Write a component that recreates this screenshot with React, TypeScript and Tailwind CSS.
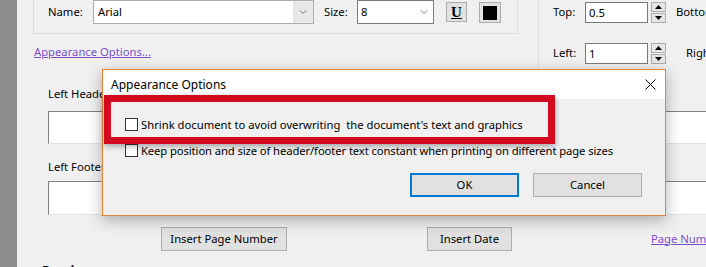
import { ChevronDown } from 'lucide-react';

const font = "font-['Noto_Sans','Open_Sans',sans-serif]";

const Spinner = () => (
  <div className="flex flex-col gap-[1px] ml-[3px]">
    <div className="w-[15px] h-[10px] bg-[#e6e6e6] border border-[#adadad] flex items-center justify-center">
      <svg width="7" height="4" viewBox="0 0 7 4"><path d="M0 4 L3.5 0 L7 4 Z" fill="#000" /></svg>
    </div>
    <div className="w-[15px] h-[10px] bg-[#e6e6e6] border border-[#adadad] flex items-center justify-center">
      <svg width="7" height="4" viewBox="0 0 7 4"><path d="M0 0 L3.5 4 L7 0 Z" fill="#000" /></svg>
    </div>
  </div>
);

const TextBox = ({ className = '' }: { className?: string }) => (
  <div className={`bg-white border border-t-[#828282] border-l-[#828282] border-r-[#e3e3e3] border-b-[#e3e3e3] ${className}`} />
);

const Btn = ({ label, className = '' }: { label: string; className?: string }) => (
  <div className={`h-[24px] bg-[#e1e1e1] border border-[#adadad] flex items-center justify-center text-black ${className}`}>
    {label}
  </div>
);

const App = () => {
  return (
    <div className={`relative w-[706px] h-[267px] overflow-hidden flex bg-[#f0f0f0] text-[11.25px] ${font}`}>
      {/* window edge */}
      <div className="w-[17px] shrink-0 bg-[#8c8c8c]" />

      <div className="flex-1 flex flex-col text-black">
        {/* Font + Margin groups */}
        <div className="flex h-[70px] shrink-0">
          <div className="w-[521px] shrink-0 flex flex-col">
            <div className="ml-[16px] w-[485px] h-[34px] border-x border-b border-[#dcdcdc] flex items-start pl-[14px]">
              <span className="w-[45px] mt-[4px]">Name:</span>
              <div className="w-[221px] h-[24px] border border-[#adadad] bg-white flex">
                <span className="flex-1 pl-[4px] pt-[3px]">Arial</span>
                <div className="w-[20px] bg-[#e8e8e8] flex items-center justify-center">
                  <ChevronDown size={12} strokeWidth={1.5} color="#555" />
                </div>
              </div>
              <span className="ml-[10px] w-[33px] mt-[4px]">Size:</span>
              <div className="w-[77px] h-[24px] border border-[#7a7a7a] bg-white flex">
                <span className="flex-1 pl-[3px] pt-[3px]">8</span>
                <div className="w-[18px] flex items-center justify-center">
                  <ChevronDown size={12} strokeWidth={1.5} color="#555" />
                </div>
              </div>
              <div className="ml-[12px] mt-[2px] w-[21px] h-[20px] bg-[#e1e1e1] border border-[#adadad] flex items-center justify-center">
                <span className="font-['Liberation_Serif',serif] font-bold text-[15px] underline leading-none">U</span>
              </div>
              <div className="ml-[12px] mt-[2px] w-[22px] h-[21px] bg-[#e1e1e1] border border-[#adadad] flex items-center justify-center">
                <div className="w-[14px] h-[14px] bg-black" />
              </div>
            </div>
            <a className="ml-[17px] mt-[12px] text-[#7a50c8] underline leading-none">Appearance Options...</a>
          </div>
          <div className="flex-1 border-l border-[#dcdcdc] flex flex-col pl-[14px] pt-[2px] gap-[20px]">
            <div className="flex items-center">
              <span className="w-[32px]">Top:</span>
              <div className="w-[63px] h-[21px] border border-[#7a7a7a] bg-white pl-[3px] leading-[19px]">0.5</div>
              <Spinner />
              <span className="ml-[10px] whitespace-nowrap">Bottom:</span>
            </div>
            <div className="flex items-center">
              <span className="w-[32px]">Left:</span>
              <div className="w-[63px] h-[21px] border border-[#7a7a7a] bg-white pl-[3px] leading-[19px]">1</div>
              <Spinner />
              <span className="ml-[20px] whitespace-nowrap">Right:</span>
            </div>
          </div>
        </div>

        {/* Header / footer text */}
        <div className="ml-[31px] mt-[16px] grid grid-cols-[220px_220px_220px] gap-x-[10px]">
          <span className="leading-[16px]">Left Header Text</span>
          <span className="leading-[16px]">Center Header Text</span>
          <span className="leading-[16px]">Right Header Text</span>
          <TextBox className="mt-[9px] h-[33px]" />
          <TextBox className="mt-[9px] h-[33px]" />
          <TextBox className="mt-[9px] h-[33px] ml-[-42px]" />
          <span className="mt-[15px] leading-[16px]">Left Footer Text</span>
          <span className="mt-[15px] leading-[16px]">Center Footer Text</span>
          <span className="mt-[15px] leading-[16px]">Right Footer Text</span>
          <TextBox className="mt-[6px] h-[34px]" />
          <TextBox className="mt-[6px] h-[34px]" />
          <TextBox className="mt-[6px] h-[34px] ml-[-42px]" />
        </div>

        <div className="mt-[12px] flex items-center shrink-0">
          <Btn label="Insert Page Number" className="ml-[144px] w-[126px]" />
          <Btn label="Insert Date" className="ml-[140px] w-[85px]" />
          <a className="ml-[139px] text-[#7a50c8] underline whitespace-nowrap">Page Number and Date Format...</a>
        </div>

        <div className="ml-[25px] mt-[13px] font-bold text-[13px] leading-none shrink-0">Preview</div>
      </div>

      {/* Appearance Options dialog */}
      <div className="absolute left-[102px] top-[69px] w-[564px] h-[147px] border border-[#e8833a] bg-[#f0f0f0] shadow-[0_4px_14px_rgba(0,0,0,0.3)] flex flex-col text-black">
        <div className="h-[29px] bg-white flex items-center justify-between pl-[8px] pr-[9px]">
          <span className="text-[12px]">Appearance Options</span>
          <svg width="11" height="11" viewBox="0 0 11 11">
            <path d="M0.5 0.5 L10.5 10.5 M10.5 0.5 L0.5 10.5" stroke="#000" strokeWidth="1" />
          </svg>
        </div>
        <div className="flex flex-col pl-[22px] pt-[19px] gap-[13px]">
          <label className="flex items-center gap-[3px] whitespace-nowrap">
            <span className="w-[13px] h-[13px] border border-[#333] bg-white shrink-0" />
            <span className="leading-[13px]">Shrink document to avoid overwriting&nbsp; the document's text and graphics</span>
          </label>
          <label className="flex items-center gap-[3px] whitespace-nowrap">
            <span className="w-[13px] h-[13px] border border-[#333] bg-white shrink-0" />
            <span className="leading-[13px] tracking-[-0.1px]">Keep position and size of header/footer text constant when printing on different page sizes</span>
          </label>
        </div>
        <div className="mt-auto mb-[18px] flex justify-end gap-[14px] pr-[23px]">
          <div className="w-[109px] h-[24px] border-2 border-[#0078d7] bg-[#e1e1e1] flex items-center justify-center">OK</div>
          <div className="w-[109px] h-[24px] border border-[#adadad] bg-[#e1e1e1] flex items-center justify-center">Cancel</div>
        </div>
      </div>

      {/* red highlight */}
      <div className="absolute left-[104px] top-[95px] w-[451px] h-[49px] border-[7px] border-[#d2091f] shadow-[0_2px_6px_rgba(0,0,0,0.35)]" />
    </div>
  );
};

export default App;
